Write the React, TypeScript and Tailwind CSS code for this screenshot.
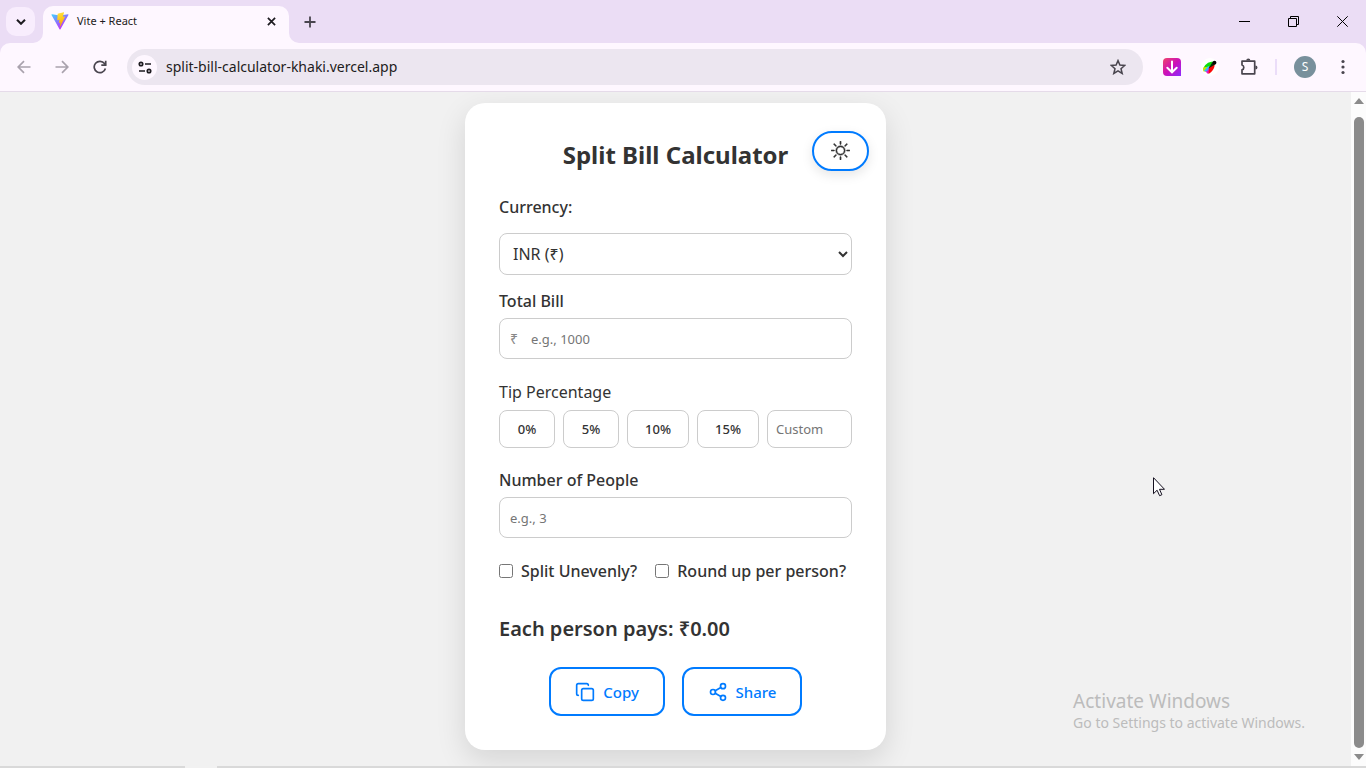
import { useState } from "react";
import type { ReactNode } from "react";
import { Copy, Share2 } from "lucide-react";
import { BsSun } from "react-icons/bs";

function ViteLogo() {
  return (
    <svg viewBox="0 0 32 32" className="size-[18px] shrink-0" aria-hidden="true">
      <defs>
        <linearGradient id="viteA" x1="0" y1="0" x2="0.6" y2="0.9">
          <stop offset="0" stopColor="#41d1ff" />
          <stop offset="1" stopColor="#bd34fe" />
        </linearGradient>
        <linearGradient id="viteB" x1="0.4" y1="0" x2="0.6" y2="0.9">
          <stop offset="0" stopColor="#ffea83" />
          <stop offset="0.1" stopColor="#ffdd35" />
          <stop offset="1" stopColor="#ffa800" />
        </linearGradient>
      </defs>
      <path fill="url(#viteA)" d="M31 5.2 16.8 30.6a.9.9 0 0 1-1.6 0L.9 5.2a.9.9 0 0 1 .9-1.3L16 6.4l14.1-2.5a.9.9 0 0 1 .9 1.3Z" />
      <path fill="url(#viteB)" d="M22.6.6 12.1 2.7a.4.4 0 0 0-.3.4l-.7 11a.4.4 0 0 0 .5.4l2.9-.7c.3 0 .5.2.5.5l-.9 4.3c-.1.3.2.5.5.4l1.8-.5c.3-.1.5.2.5.5l-1.4 6.7c-.1.4.5.6.7.3l8.9-17.5c.1-.3-.1-.6-.5-.6l-3 .6a.4.4 0 0 1-.4-.5l2-6.9a.4.4 0 0 0-.6-.5Z" />
    </svg>
  );
}

function TabStrip() {
  return (
    <header className="flex h-[43px] shrink-0 bg-[#ebddf5]">
      <div className="flex w-[43px] items-center pl-1.5">
        <button aria-label="Search tabs" className="flex size-[29px] items-center justify-center rounded-[10px] bg-[#f8edfd]">
          <svg viewBox="0 0 10 6" className="h-[6px] w-[10px]" fill="none" stroke="#1d1b20" strokeWidth="2">
            <path d="m1 .8 4 4 4-4" />
          </svg>
        </button>
      </div>
      <div className="relative mt-1.5 flex w-[246px] items-center rounded-t-[10px] bg-[#fef7ff] pr-2.5 pb-[7px] pl-2">
        <svg viewBox="0 0 10 10" className="absolute bottom-0 -left-2.5 size-2.5" fill="#fef7ff" aria-hidden="true">
          <path d="M10 0v10H0A10 10 0 0 0 10 0Z" />
        </svg>
        <svg viewBox="0 0 10 10" className="absolute -right-2.5 bottom-0 size-2.5" fill="#fef7ff" aria-hidden="true">
          <path d="M0 0v10h10A10 10 0 0 1 0 0Z" />
        </svg>
        <ViteLogo />
        <span className="ml-2 flex-1 text-[11px] text-[#1d1b20]">Vite + React</span>
        <button aria-label="Close tab" className="flex size-4 items-center justify-center">
          <svg viewBox="0 0 10 10" className="size-[9px]" stroke="#1d1b20" strokeWidth="1.9">
            <path d="m1 1 8 8M9 1 1 9" />
          </svg>
        </button>
      </div>
      <button aria-label="New tab" className="ml-3 flex w-[18px] items-center justify-center">
        <svg viewBox="0 0 12 12" className="size-3" stroke="#49454e" strokeWidth="1.8">
          <path d="M6 .5v11M.5 6h11" />
        </svg>
      </button>
      <div className="flex-1" />
      <button aria-label="Minimize" className="flex w-[49px] items-center justify-center">
        <svg viewBox="0 0 11 11" className="size-[11px]" stroke="#000" fill="none"><path d="M0 5.5h11" /></svg>
      </button>
      <button aria-label="Restore" className="flex w-[49px] items-center justify-center">
        <svg viewBox="0 0 11 11" className="size-[11px]" stroke="#000" fill="none">
          <path d="M.5 2.5h8v8h-8zM2.5 2.5v-2h8v8h-2" />
        </svg>
      </button>
      <button aria-label="Close" className="flex w-12 items-center justify-center">
        <svg viewBox="0 0 11 11" className="size-[11px]" stroke="#000" fill="none"><path d="m.3.3 10.4 10.4M10.7.3.3 10.7" /></svg>
      </button>
    </header>
  );
}

function ToolButton({ label, children, width }: { label: string; children: ReactNode; width: string }) {
  return (
    <button aria-label={label} className={`flex h-7 shrink-0 items-center justify-center ${width}`}>
      {children}
    </button>
  );
}

function Toolbar() {
  return (
    <div className="shrink-0 bg-[#ebddf5]">
      <div className="flex h-[49px] items-center rounded-t-[10px] border-b border-[#e5dbe9] bg-[#fef7ff] pr-1.5 pl-1">
        <ToolButton label="Back" width="w-10">
          <svg viewBox="0 0 14 14" className="size-[14px]" fill="none" stroke="#a9a2ad" strokeWidth="1.7">
            <path d="M13.5 7H1.5M7 1.2 1.2 7 7 12.8" />
          </svg>
        </ToolButton>
        <ToolButton label="Forward" width="w-9">
          <svg viewBox="0 0 14 14" className="size-[14px]" fill="none" stroke="#a9a2ad" strokeWidth="1.7">
            <path d="M.5 7h12M7 1.2 12.8 7 7 12.8" />
          </svg>
        </ToolButton>
        <ToolButton label="Reload" width="w-10">
          <svg viewBox="0 0 14 14" className="size-[14px]" fill="none" stroke="#49454e" strokeWidth="1.7">
            <path d="M12.4 8.5A5.7 5.7 0 1 1 11.5 3.6l1.2 1.4" />
            <path d="M12.7.7v4.4H8.3" />
          </svg>
        </ToolButton>
        <div className="ml-[7px] flex h-9 flex-1 items-center rounded-full bg-[#ece6f0] pr-[17px] pl-[5px]">
          <button aria-label="View site information" className="flex size-[25px] items-center justify-center rounded-full bg-[#fef7ff]">
            <svg viewBox="0 0 14 13" className="h-[13px] w-[14px]" fill="none" stroke="#1d1b20" strokeWidth="1.7">
              <circle cx="3" cy="3" r="1.7" />
              <circle cx="11" cy="10" r="1.7" />
              <path d="M7 3h6M1 10h6" />
            </svg>
          </button>
          <input aria-label="Address" defaultValue="split-bill-calculator-khaki.vercel.app" className="ml-[9px] min-w-0 flex-1 bg-transparent text-sm text-[#1d1b20] outline-none" />
          <button aria-label="Bookmark this tab">
            <svg viewBox="0 0 16 16" className="size-4" fill="none" stroke="#49454e" strokeWidth="1.5" strokeLinejoin="miter">
              <path d="m8 1.6 1.9 4.5 4.8.4-3.7 3.2 1.2 4.8L8 11.9l-4.2 2.6L5 9.7 1.3 6.5l4.8-.4Z" />
            </svg>
          </button>
        </div>
        <ToolButton label="Downloader" width="ml-2.5 w-[38px]">
          <svg viewBox="0 0 18 18" className="size-[18px]">
            <defs>
              <linearGradient id="dl" x1="0" y1="0" x2="1" y2="1">
                <stop offset="0" stopColor="#f0456a" />
                <stop offset=".5" stopColor="#cc10b8" />
                <stop offset="1" stopColor="#8c2cff" />
              </linearGradient>
            </defs>
            <path d="M4 0h10a4 4 0 0 1 4 4v14H4a4 4 0 0 1-4-4V4a4 4 0 0 1 4-4Z" fill="url(#dl)" />
            <path d="M9 3.5v10.5M4.300 9.8 9 14.3l4.700-4.500" fill="none" stroke="#fff" strokeWidth="2" strokeLinecap="round" />
          </svg>
        </ToolButton>
        <ToolButton label="Color picker" width="w-[38px]">
          <svg viewBox="0 0 18 18" className="size-[18px]">
            <circle cx="9" cy="9" r="9" fill="#fff" />
            <path d="M2 12C3 7 7 3.5 12.5 3.5L9 9Z" fill="#0be00b" />
            <path d="M2.2 9.5 8 8.5l-3 5.2-2.8-.5Z" fill="#c9e600" />
            <path d="m4.5 13.5 4-5 2.5 1-4 6.5Z" fill="#e815c8" />
            <path d="m2.8 13 4.7-5 1.5 1.5-3.3 4Z" fill="#35b6ff" />
            <path d="M8 9.5 13.5 6c.5 4-2 7.5-6 10Z" fill="#fb0808" />
            <path d="M7.5 10.5 11.5 4l2.5 2.5Z" fill="#062b06" />
            <circle cx="13.5" cy="4.7" r="1.9" fill="#050505" />
          </svg>
        </ToolButton>
        <ToolButton label="Extensions" width="w-10">
          <svg viewBox="0 0 18 18" className="size-[18px]" fill="none" stroke="#49454e" strokeWidth="1.7" strokeLinejoin="round">
            <path d="M2 3.2h12.7v12.6H2v-4a2.5 2.5 0 0 0 0-4.8Z" />
            <path d="M6.2 2.6a2.1 2.1 0 0 1 4.2 0ZM15.4 7.400a2.1 2.1 0 0 1 0 4.200Z" fill="#49454e" stroke="none" />
          </svg>
        </ToolButton>
        <div className="ml-1.5 h-4 w-0.5 bg-[#ebddf9]" />
        <button aria-label="Profile" className="ml-[17px] flex size-[22px] items-center justify-center rounded-full bg-[#78909c] text-xs text-white">
          S
        </button>
        <ToolButton label="Menu" width="ml-2.5 w-[34px]">
          <svg viewBox="0 0 4 16" className="h-4 w-1" fill="#49454e">
            <circle cx="2" cy="2.5" r="1.6" />
            <circle cx="2" cy="8" r="1.6" />
            <circle cx="2" cy="13.5" r="1.6" />
          </svg>
        </ToolButton>
      </div>
    </div>
  );
}

const field = "w-full rounded-lg border border-[#ccc] bg-white text-[#333] placeholder:text-[#757575] outline-none";
const tips = [0, 5, 10, 15];
const symbols: Record<string, string> = { INR: "₹", USD: "$", EUR: "€" };

function Calculator() {
  const [currency, setCurrency] = useState("INR");
  const [bill, setBill] = useState("");
  const [tip, setTip] = useState("");
  const [people, setPeople] = useState("");
  const [uneven, setUneven] = useState(false);
  const [roundUp, setRoundUp] = useState(false);
  const symbol = symbols[currency];
  const count = Number(people);
  const share = count > 0 ? (Number(bill) * (1 + Number(tip) / 100)) / count : 0;
  const total = (roundUp ? Math.ceil(share) : share).toFixed(2);

  return (
    <main className="relative w-full max-w-[421px] rounded-[20px] bg-white px-[34px] pt-8 pb-[34px] text-base leading-6 text-[#333] shadow-[0_10px_30px_rgba(0,0,0,0.12)]">
      <button aria-label="Toggle theme" className="absolute top-7 right-[17px] flex h-10 w-[57px] items-center justify-center rounded-[20px] border-2 border-[#007bff] bg-white pb-0.5 shadow-[0_4px_12px_rgba(0,0,0,0.1)]">
        <BsSun size={19} strokeWidth={0.4} />
      </button>
      <h1 className="text-center text-[24px] leading-10 font-bold">Split Bill Calculator</h1>

      <label htmlFor="currency" className="mt-5 block font-medium">Currency:</label>
      <select id="currency" value={currency} onChange={(e) => setCurrency(e.target.value)} className={`${field} mt-3.5 block h-[42px] pr-[7px] pl-[9px]`}>
        <option value="INR">INR (₹)</option>
        <option value="USD">USD ($)</option>
        <option value="EUR">EUR (€)</option>
      </select>

      <label htmlFor="bill" className="mt-3.5 block font-medium">Total Bill</label>
      <div className="relative mt-[5px]">
        <span className="absolute inset-y-0 left-[11px] flex items-center text-sm text-[#888]">{symbol}</span>
        <input id="bill" inputMode="decimal" value={bill} onChange={(e) => setBill(e.target.value)} placeholder="e.g., 1000" className={`${field} block h-[41px] pr-2.5 pl-[31px] text-[13px]`} />
      </div>

      <p className="mt-[21px]">Tip Percentage</p>
      <div className="mt-1.5 flex gap-2">
        {tips.map((t) => (
          <button key={t} onClick={() => setTip(String(t))} className={`h-[38px] shrink-0 rounded-lg border border-[#ccc] bg-white text-[13px] font-medium ${t < 10 ? "w-14" : "w-[62px]"}`}>
            {t}%
          </button>
        ))}
        <input aria-label="Custom tip" value={tip} onChange={(e) => setTip(e.target.value)} placeholder="Custom" className={`${field} h-[38px] min-w-0 px-2 text-[13px]`} />
      </div>

      <label htmlFor="people" className="mt-5 block font-medium">Number of People</label>
      <input id="people" inputMode="numeric" value={people} onChange={(e) => setPeople(e.target.value)} placeholder="e.g., 3" className={`${field} mt-[5px] block h-[41px] px-2.5 text-[13px]`} />

      <div className="mt-[21px] flex gap-[18px] font-medium whitespace-nowrap">
        <label className="flex items-center gap-2">
          <input type="checkbox" checked={uneven} onChange={(e) => setUneven(e.target.checked)} className="size-3.5" />
          Split Unevenly?
        </label>
        <label className="flex items-center gap-2">
          <input type="checkbox" checked={roundUp} onChange={(e) => setRoundUp(e.target.checked)} className="size-3.5" />
          Round up per person?
        </label>
      </div>

      <h2 className="mt-8 text-[20px] leading-7 font-semibold">Each person pays: {symbol}{total}</h2>

      <div className="mt-6 flex justify-center gap-[17px] text-[15px] font-medium text-[#007bff]">
        <button className="flex h-[49px] w-[116px] items-center justify-center gap-2 rounded-xl border-2 border-[#007bff]">
          <Copy size={20} /> Copy
        </button>
        <button className="flex h-[49px] w-[120px] items-center justify-center gap-2 rounded-xl border-2 border-[#007bff]">
          <Share2 size={20} /> Share
        </button>
      </div>
    </main>
  );
}

function Scrollbar() {
  return (
    <div className="flex w-[15px] shrink-0 flex-col items-center bg-[#fcfcfc] py-1.5" aria-hidden="true">
      <svg viewBox="0 0 10 6" className="h-1.5 w-2.5" fill="#8b8b8b"><path d="m5 0 5 6H0Z" /></svg>
      <div className="mt-[13px] mb-1.5 w-2.5 flex-1 rounded-full bg-[#8b8b8b]" />
      <svg viewBox="0 0 10 6" className="h-1.5 w-2.5" fill="#8b8b8b"><path d="m5 6 5-6H0Z" /></svg>
    </div>
  );
}

export default function App() {
  return (
    <div className="relative flex h-screen min-h-[720px] flex-col bg-[#f1f1f1] font-['Noto_Sans','Open_Sans',sans-serif]">
      <TabStrip />
      <Toolbar />
      <div className="flex min-h-0 flex-1">
        <div className="flex flex-1 items-start justify-center overflow-hidden pt-[11px]">
          <Calculator />
        </div>
        <Scrollbar />
      </div>
      <div className="flex h-0.5 shrink-0 bg-[#d9d9d9]">
        <div className="ml-[185px] w-8 bg-[#f1f1f1]" />
      </div>
      <div className="pointer-events-none absolute right-[61px] bottom-[35px] text-[#bcbcbc]">
        <p className="text-[19px] leading-6">Activate Windows</p>
        <p className="text-[14px] leading-5">Go to Settings to activate Windows.</p>
      </div>
      <svg viewBox="0 0 12 20" className="pointer-events-none absolute top-[477px] right-[201px] h-5 w-3" fill="#fff" stroke="#14101f" strokeWidth="1" aria-hidden="true">
        <path d="M.5.7v16l3.6-3.5 2.5 5.5 2.3-1-2.4-5.4h5Z" />
      </svg>
    </div>
  );
}
